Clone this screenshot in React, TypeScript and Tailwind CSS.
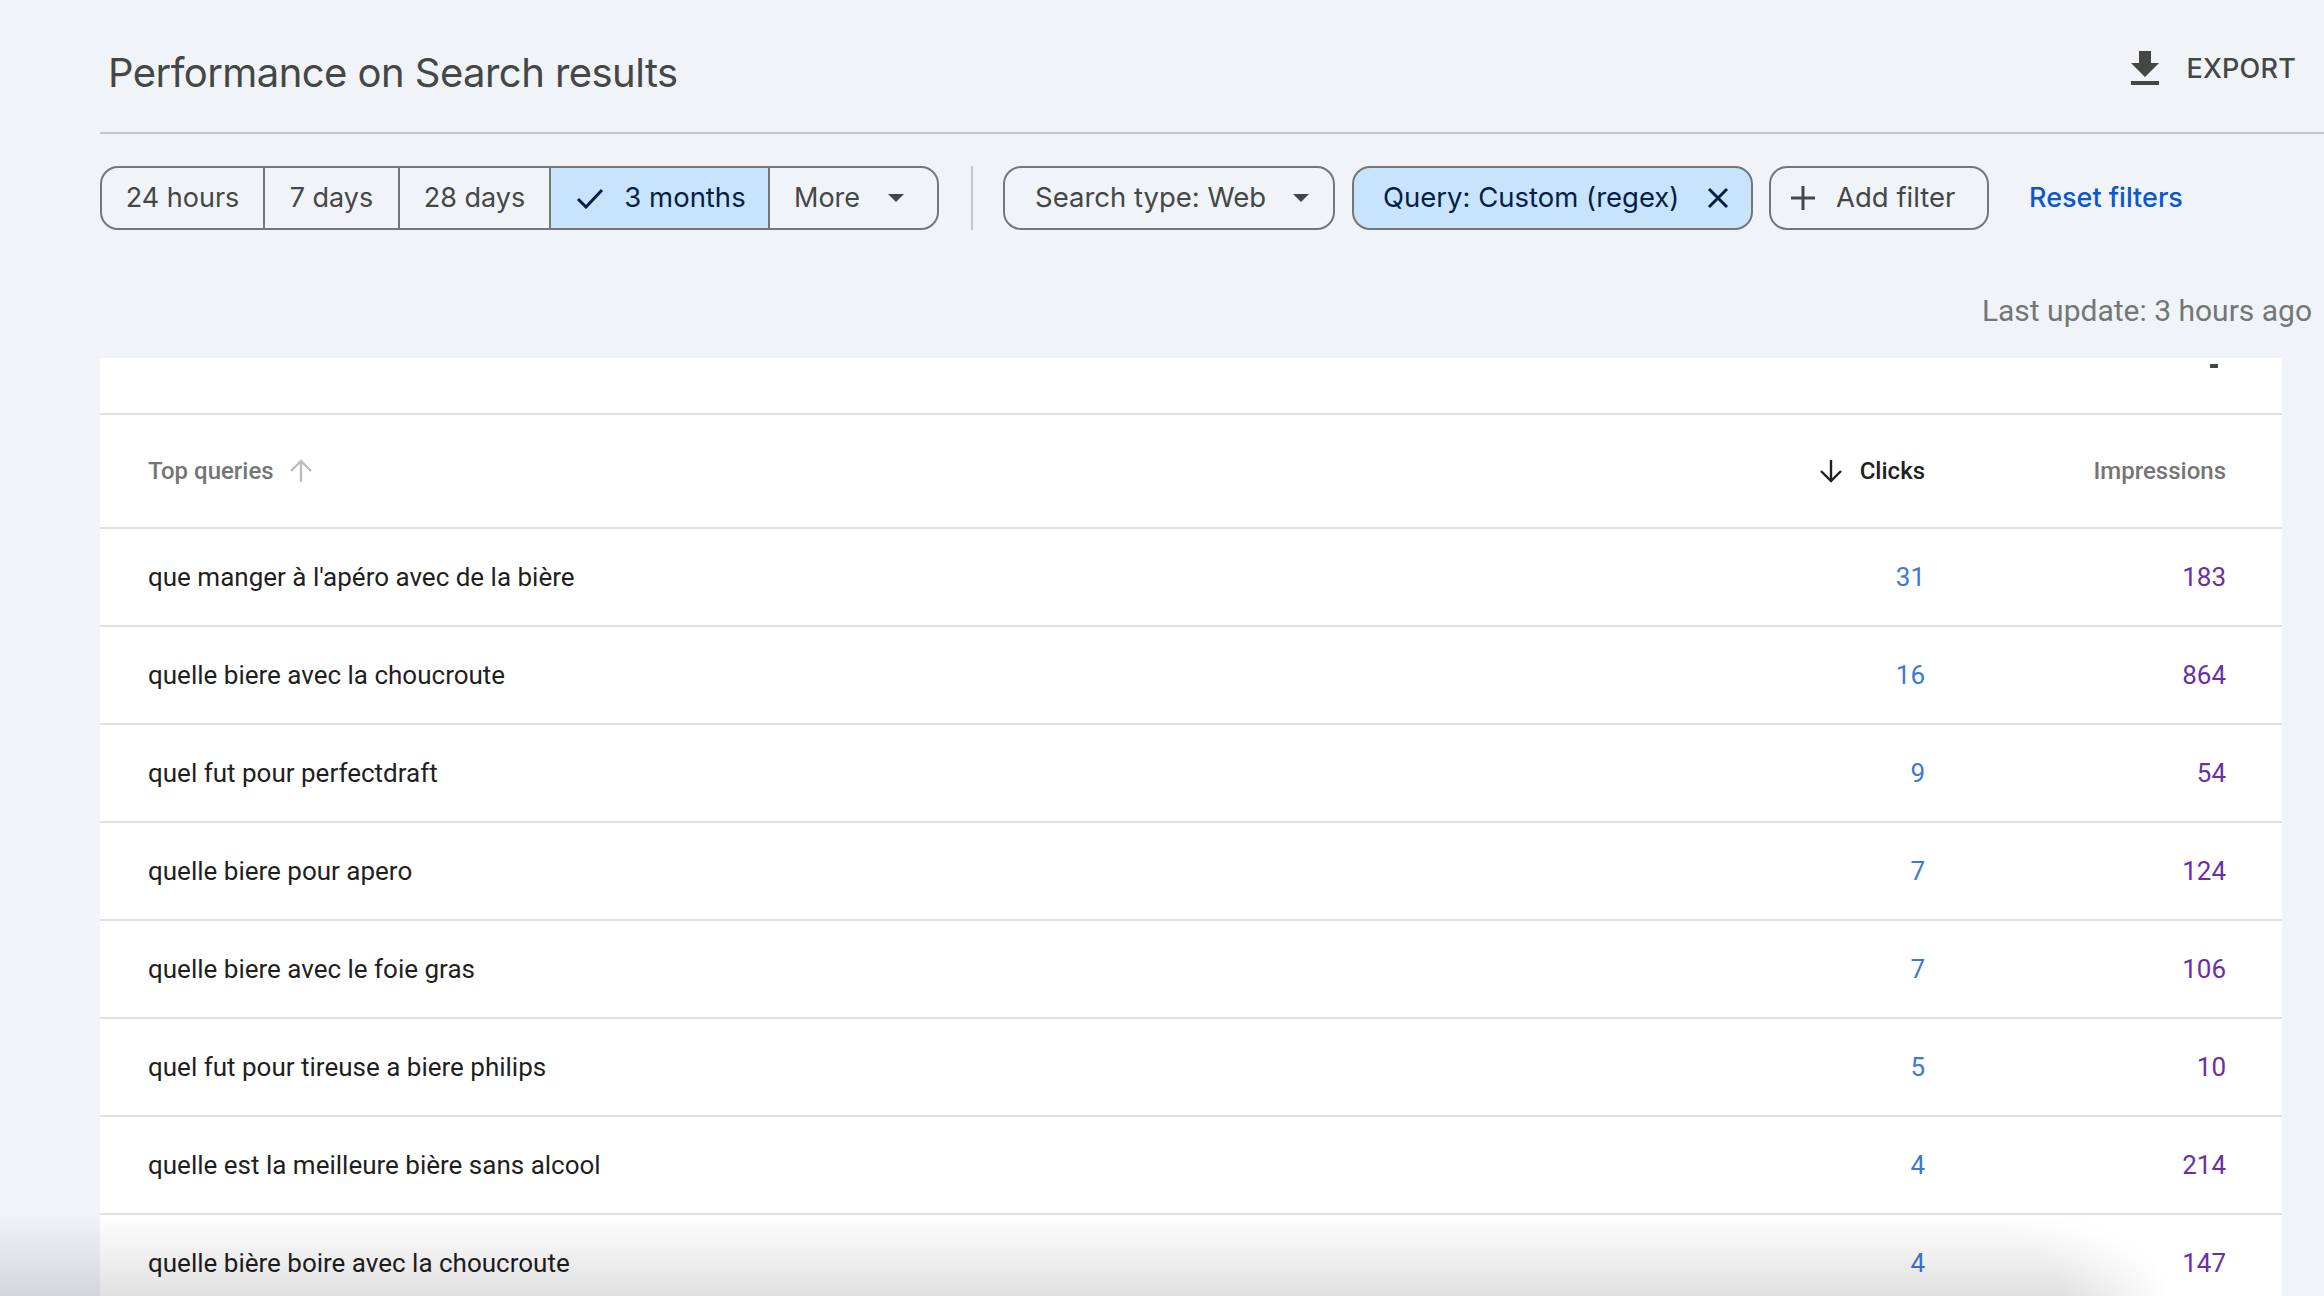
import React from "react";

const rows = [
  ["que manger à l'apéro avec de la bière", "31", "183"],
  ["quelle biere avec la choucroute", "16", "864"],
  ["quel fut pour perfectdraft", "9", "54"],
  ["quelle biere pour apero", "7", "124"],
  ["quelle biere avec le foie gras", "7", "106"],
  ["quel fut pour tireuse a biere philips", "5", "10"],
  ["quelle est la meilleure bière sans alcool", "4", "214"],
  ["quelle bière boire avec la choucroute", "4", "147"],
];

function Caret() {
  return (
    <svg width="16" height="8" viewBox="0 0 16 8" className="shrink-0">
      <path d="M0 0h16L8 8z" fill="#444746" />
    </svg>
  );
}

export default function App() {
  return (
    <div className="relative w-[2324px] h-[1296px] overflow-hidden bg-[#f0f4f9] font-['Inter',sans-serif]">
      <div className="pl-[100px]">
        <header className="flex h-[134px] items-center justify-between border-b-2 border-[#c4c7c5]">
          <h1 className="pl-[8px] pt-[13px] text-[40px] leading-[48px] font-normal tracking-[-0.55px] text-[#444746]">
            Performance on Search results
          </h1>
          <button className="flex items-center pt-[5px] pr-[28px] text-[27px] leading-[32px] font-medium tracking-[0.2px] text-[#444746]">
            <svg width="48" height="48" viewBox="0 0 24 24" className="mr-[17px]">
              <path d="M19 9h-4V3H9v6H5l7 7 7-7zM5 18v2h14v-2H5z" fill="#444746" />
            </svg>
            EXPORT
          </button>
        </header>

        <div className="mt-[32px] flex h-[64px] items-stretch text-[27.5px] text-[#444746]">
          <div className="flex w-[839px] overflow-hidden rounded-[18px] border-2 border-[#747775] text-[27px]">
            <div className="flex w-[163px] items-center justify-center border-r-2 border-[#747775]">24 hours</div>
            <div className="flex w-[135px] items-center justify-center border-r-2 border-[#747775]">7 days</div>
            <div className="flex w-[151px] items-center justify-center border-r-2 border-[#747775]">28 days</div>
            <div className="flex w-[219px] items-center justify-center border-r-2 border-[#747775] bg-[#c7e4fc] pl-[3px] text-[27.5px] text-[#041e49]">
              <svg width="28" height="22" viewBox="0 0 28 22" className="mr-[20px]">
                <path d="M2 12l8 8L26 3" fill="none" stroke="#041e49" strokeWidth="3" />
              </svg>
              3 months
            </div>
            <div className="flex flex-1 items-center pl-[24px]">
              More
              <span className="ml-[28px]"><Caret /></span>
            </div>
          </div>

          <div className="ml-[32px] w-[2px] bg-[#c4c7c5]" />

          <div className="ml-[30px] flex w-[332px] items-center rounded-[18px] border-2 border-[#747775] pl-[30px]">
            Search type: Web
            <span className="ml-[27px]"><Caret /></span>
          </div>
          <div className="ml-[17px] flex w-[401px] items-center rounded-[18px] border-2 border-[#747775] bg-[#c7e4fc] pl-[29px] text-[#041e49]">
            Query: Custom (regex)
            <svg width="22" height="22" viewBox="0 0 22 22" className="ml-[28px]">
              <path d="M2 2l18 18M20 2L2 20" stroke="#041e49" strokeWidth="3" fill="none" />
            </svg>
          </div>
          <div className="ml-[16px] flex w-[220px] items-center rounded-[18px] border-2 border-[#747775] pl-[19px]">
            <svg width="26" height="26" viewBox="0 0 26 26" className="mr-[20px]">
              <path d="M13 1v24M1 13h24" stroke="#444746" strokeWidth="3" fill="none" />
            </svg>
            Add filter
          </div>
          <a className="ml-[40px] flex items-center text-[27px] font-medium text-[#0b57d0]">Reset filters</a>
        </div>

        <div className="mt-[62px] flex h-[36px] items-center justify-end pr-[12px] font-['Roboto',sans-serif] text-[30px] text-[#747775]">
          Last update: 3 hours ago
        </div>

        <div className="mt-[30px] w-[2182px] bg-white font-['Roboto',sans-serif] text-[#1f1f1f]">
          <div className="flex h-[57px] justify-end border-b-2 border-[#e0e0e0] pr-[64px] pt-[6px]">
            <div className="h-[4px] w-[8px] bg-[#444746]" />
          </div>
          <div className="flex h-[114px] items-center border-b-2 border-[#e0e0e0] pl-[48px] pr-[56px] text-[24px] font-medium text-[#757575]">
            <div className="flex flex-1 items-center">
              Top queries
              <svg width="22" height="24" viewBox="0 0 22 24" className="ml-[16px]">
                <path d="M11 23V2M1 12L11 2l10 10" stroke="#bdbdbd" strokeWidth="2.4" fill="none" />
              </svg>
            </div>
            <div className="flex items-center justify-end text-[#1f1f1f]">
              <svg width="22" height="24" viewBox="0 0 22 24" className="mr-[18px]">
                <path d="M11 1v21M1 12l10 10 10-10" stroke="#1f1f1f" strokeWidth="2.4" fill="none" />
              </svg>
              Clicks
            </div>
            <div className="w-[301px] text-right">Impressions</div>
          </div>
          {rows.map(([q, c, i], idx) => (
            <div
              key={q}
              className={
                idx === rows.length - 1
                  ? "flex h-[96px] items-center pl-[48px] pr-[56px] text-[26px]"
                  : "flex h-[98px] items-center border-b-2 border-[#e0e0e0] pl-[48px] pr-[56px] text-[26px]"
              }
            >
              <div className="flex-1">{q}</div>
              <div className="text-[#3b78d8]">{c}</div>
              <div className="w-[301px] text-right text-[#6a2ea6]">{i}</div>
            </div>
          ))}
        </div>
      </div>

      <div className="pointer-events-none absolute bottom-0 left-0 h-[82px] w-full bg-gradient-to-t from-black/[0.12] to-transparent [mask-image:radial-gradient(ellipse_2170px_300px_at_0_100%,black_95%,transparent_100%)]" />
    </div>
  );
}
